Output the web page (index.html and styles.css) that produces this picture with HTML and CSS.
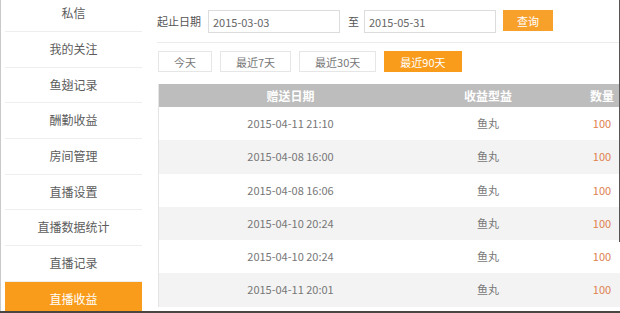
FILE: index.html
```html
<!doctype html>
<html>
<head>
  <meta charset="utf-8">
  <link rel="stylesheet" href="styles.css">
</head>
<body>
  <div class="page">
    <div class="sidebar">
      <div class="item">私信</div>
      <div class="item">我的关注</div>
      <div class="item">鱼翅记录</div>
      <div class="item">酬勤收益</div>
      <div class="item">房间管理</div>
      <div class="item">直播设置</div>
      <div class="item">直播数据统计</div>
      <div class="item">直播记录</div>
      <div class="item active">直播收益</div>
    </div>

    <div class="main">
      <div class="search">
        <span class="label">起止日期</span>
        <input class="date" type="text" value="2015-03-03">
        <span class="to">至</span>
        <input class="date" type="text" value="2015-05-31">
        <button class="query">查询</button>
      </div>

      <div class="quick">
        <button class="range">今天</button>
        <button class="range">最近7天</button>
        <button class="range">最近30天</button>
        <button class="range on">最近90天</button>
      </div>

      <div class="table">
        <div class="row head">
          <div>赠送日期</div>
          <div>收益型益</div>
          <div>数量</div>
        </div>
        <div class="row">
          <div>2015-04-11 21:10</div>
          <div>鱼丸</div>
          <div class="num">100</div>
        </div>
        <div class="row">
          <div>2015-04-08 16:00</div>
          <div>鱼丸</div>
          <div class="num">100</div>
        </div>
        <div class="row">
          <div>2015-04-08 16:06</div>
          <div>鱼丸</div>
          <div class="num">100</div>
        </div>
        <div class="row">
          <div>2015-04-10 20:24</div>
          <div>鱼丸</div>
          <div class="num">100</div>
        </div>
        <div class="row">
          <div>2015-04-10 20:24</div>
          <div>鱼丸</div>
          <div class="num">100</div>
        </div>
        <div class="row">
          <div>2015-04-11 20:01</div>
          <div>鱼丸</div>
          <div class="num">100</div>
        </div>
      </div>
    </div>
  </div>
</body>
</html>
```

FILE: styles.css
```css
html, body {
  margin: 0;
  padding: 0;
}
body {
  width: 620px;
  height: 313px;
  overflow: hidden;
  background: #fff;
  font-family: "Noto Sans CJK SC", "Noto Sans", sans-serif;
  color: #555;
  position: relative;
}
/* window frame edges */
body::before {
  content: "";
  position: absolute;
  left: 0;
  bottom: 0;
  width: 100%;
  height: 2px;
  background: #4a4742;
}
body::after {
  content: "";
  position: absolute;
  right: 0;
  top: 0;
  width: 1px;
  height: 242px;
  background: #555;
}

.page {
  display: flex;
  height: 313px;
  border-left: 1px solid #c9c9c9;
}

.sidebar {
  width: 137px;
  flex: none;
  padding-left: 4px;
  margin-top: -3.7px;
}
.item {
  height: 34.7px;
  line-height: 34.7px;
  border-bottom: 1px solid #eeeeee;
  text-align: center;
  font-size: 12px;
  color: #5c5c5c;
}
.item.active {
  background: #f99c1b;
  color: #fff;
  border-bottom: none;
  height: 36px;
}

.main {
  flex: 1;
  min-width: 0;
  padding-left: 15px;
  padding-top: 10px;
}

.search {
  display: flex;
  align-items: flex-start;
  height: 23px;
  padding-bottom: 9px;
  border-bottom: 1px solid #ececec;
  font-size: 11px;
}
.label {
  line-height: 23px;
  margin-right: 7px;
}
.to {
  line-height: 23px;
  margin: 0 5px 0 8px;
}
.date {
  box-sizing: border-box;
  width: 132px;
  height: 23px;
  border: 1px solid #dcdcdc;
  padding: 0 4px;
  margin: 0;
  font-family: "Noto Sans CJK SC", "Noto Sans", sans-serif;
  font-size: 11px;
  color: #666;
  outline: none;
}
.query {
  width: 50px;
  height: 21px;
  margin-left: 7px;
  border: none;
  background: #f7a12b;
  color: #fff;
  font-family: "Noto Sans CJK SC", "Noto Sans", sans-serif;
  font-size: 11px;
  padding: 0;
}

.quick {
  display: flex;
  gap: 8px;
  margin-top: 8px;
  padding-left: 1px;
}
.range {
  height: 21px;
  padding: 0 15px;
  border: 1px solid #e6e6e6;
  background: #fff;
  color: #777;
  font-family: "Noto Sans CJK SC", "Noto Sans", sans-serif;
  font-size: 11px;
}
.range.on {
  background: #f99c1b;
  border-color: #f99c1b;
  color: #fff;
}

.table {
  margin-top: 12px;
  margin-left: 1px;
  width: 492px;
  border-left: 1px solid #e4e4e4;
}
.row {
  display: grid;
  grid-template-columns: 263px 132px 96px;
  height: 33.3px;
  line-height: 33.3px;
  text-align: center;
  font-size: 11px;
  color: #777;
}
.row:nth-child(odd) {
  background: #f3f3f3;
}
.row.head {
  height: 23px;
  line-height: 23px;
  background: #bdbdbd;
  color: #fff;
  font-weight: bold;
  font-size: 12px;
}
.num {
  color: #e0814f;
}
```
